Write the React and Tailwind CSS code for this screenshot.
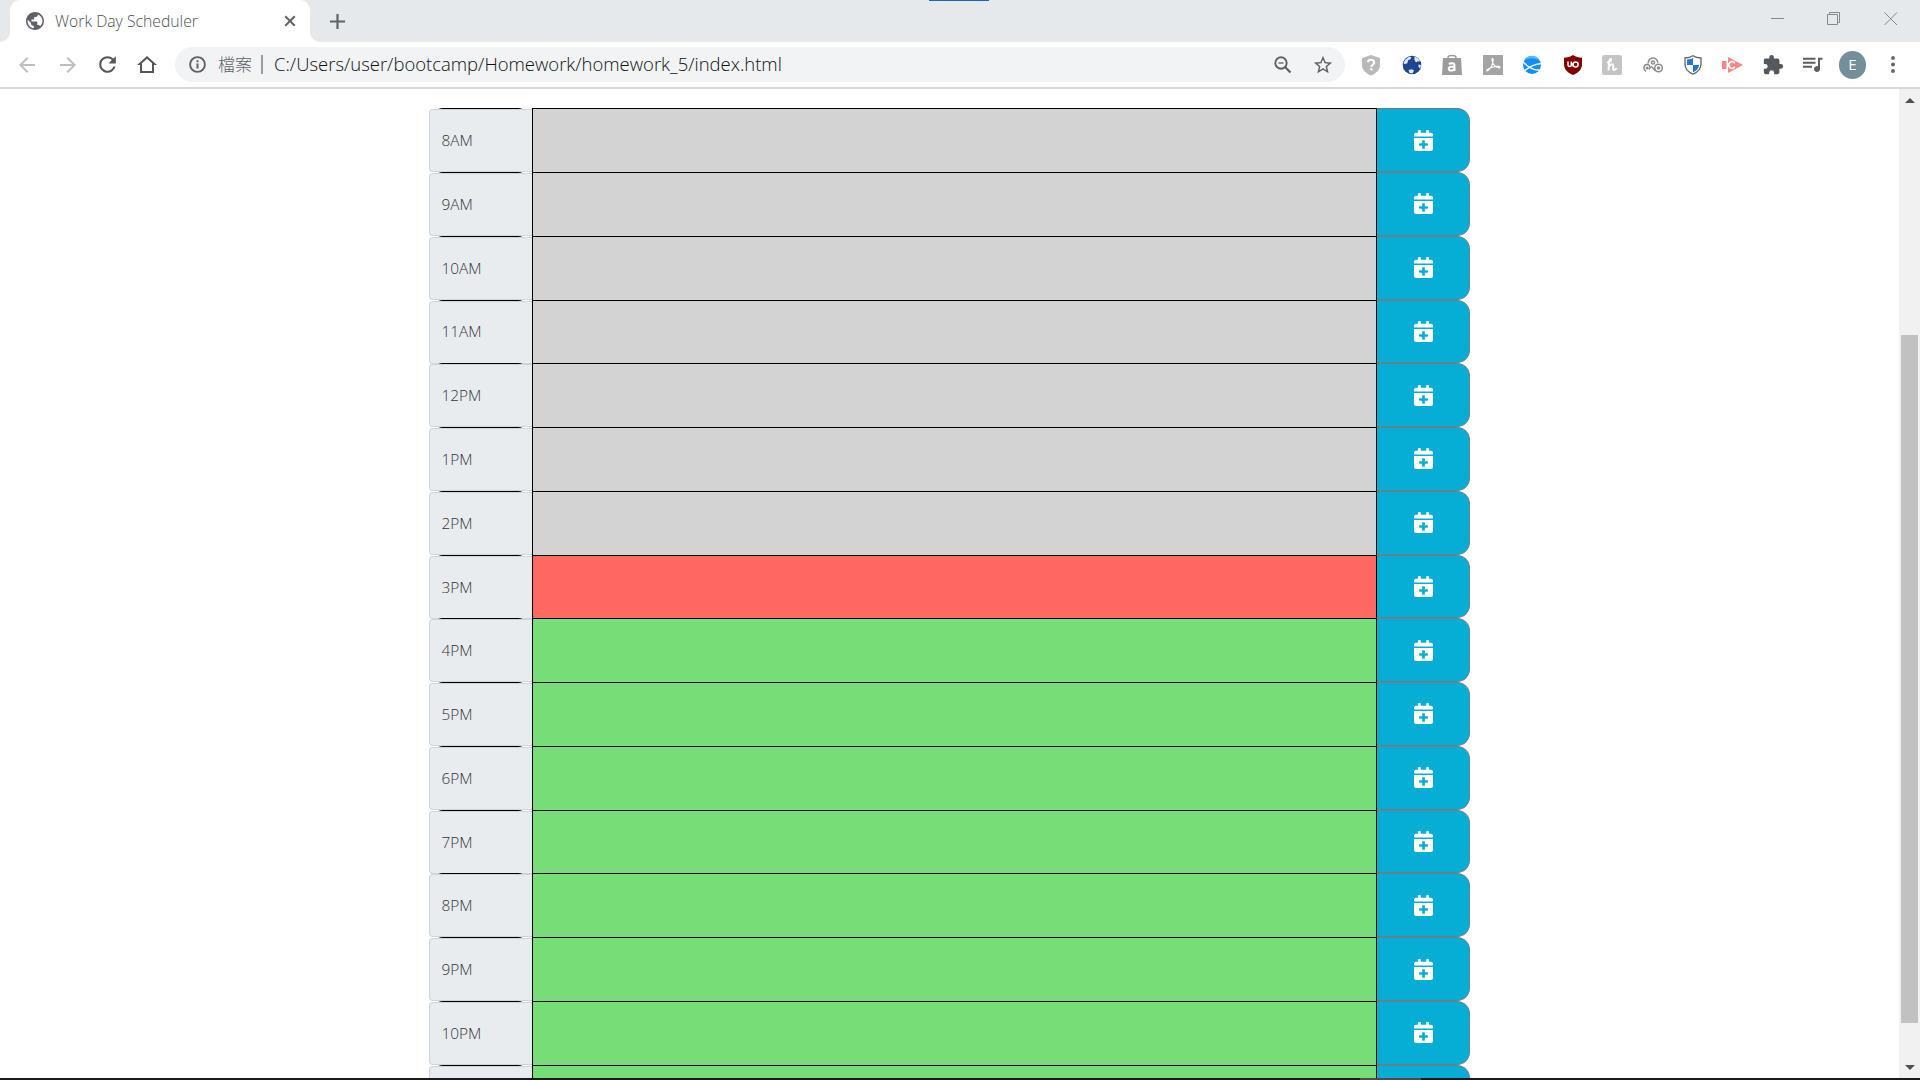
import React from "react";

const HOURS = [
  ["8AM", "past"], ["9AM", "past"], ["10AM", "past"], ["11AM", "past"],
  ["12PM", "past"], ["1PM", "past"], ["2PM", "past"], ["3PM", "present"],
  ["4PM", "future"], ["5PM", "future"], ["6PM", "future"], ["7PM", "future"],
  ["8PM", "future"], ["9PM", "future"], ["10PM", "future"], ["", "future"],
];
const FILL = { past: "bg-[#d3d3d3]", present: "bg-[#ff6961]", future: "bg-[#77dd77]" };

function Material({ d, size = 24, className = "" }) {
  return (
    <svg width={size} height={size} viewBox="0 0 24 24" fill="currentColor" className={`block shrink-0 ${className}`}>
      <path d={d} />
    </svg>
  );
}

function CalendarPlus() {
  return (
    <svg width="19" height="21" viewBox="0 0 448 512" preserveAspectRatio="none" fill="currentColor" className="block">
      <path d="M436 160H12c-6.600 0-12-5.400-12-12v-36c0-26.500 21.500-48 48-48h48V12c0-6.600 5.400-12 12-12h40c6.600 0 12 5.400 12 12v52h128V12c0-6.600 5.400-12 12-12h40c6.600 0 12 5.400 12 12v52h48c26.500 0 48 21.500 48 48v36c0 6.600-5.400 12-12 12zM12 192h424c6.600 0 12 5.400 12 12v260c0 26.500-21.500 48-48 48H48c-26.500 0-48-21.500-48-48V204c0-6.600 5.400-12 12-12zm316 140c0-6.600-5.400-12-12-12h-60v-60c0-6.600-5.400-12-12-12h-40c-6.600 0-12 5.400-12 12v60h-60c-6.600 0-12 5.400-12 12v40c0 6.600 5.400 12 12 12h60v60c0 6.600 5.400 12 12 12h40c6.600 0 12-5.400 12-12v-60h60c6.600 0 12-5.400 12-12v-40z" />
    </svg>
  );
}

function TabStrip() {
  return (
    <div className="flex h-[42px] bg-[#e5e9ec]">
      <div className="flex w-[10px] items-end bg-white">
        <div className="h-full w-full rounded-br-[10px] bg-[#e5e9ec]" />
      </div>
      <div className="bg-[#e5e9ec]">
        <div className="flex h-[42px] w-[300px] items-center rounded-t-[10px] bg-white pl-[13px]">
          <Material size={24} className="text-[#5f6368]" d="M12 3C7.030 3 3 7.030 3 12s4.030 9 9 9 9-4.030 9-9-4.030-9-9-9zm-1.200 16.300C7.300 18.800 4.600 15.700 4.600 12c0-.5.100-.9.200-1.300L8 13.900v.9c0 1 .8 1.800 1.800 1.800l1 .6v2.100zm6.200-2.100c-.3-.8-1-1.300-1.800-1.300h-.9v-2.600c0-.5-.4-.9-.9-.9H8.500V10.600h1.800c.5 0 .9-.4.900-.9V7.900H13c1 0 1.800-.8 1.800-1.800v-.6c2.700 1 4.700 3.600 4.700 6.600 0 1.900-.9 3.800-2.500 5.100z" />
          <span className="ml-[8px] w-[232px] whitespace-nowrap pt-[1px] text-[15.750px] font-light text-[#4c4f54]">Work Day Scheduler</span>
          <svg width="12" height="12" viewBox="0 0 12 12" className="-ml-[3px] block shrink-0"><path d="M1.200 1.200l9.600 9.600M10.800 1.200l-9.600 9.600" stroke="#5f6368" strokeWidth="2" /></svg>
        </div>
      </div>
      <div className="flex w-[600px] bg-white">
        <div className="flex w-full rounded-bl-[10px] bg-[#e5e9ec] pl-[20px]">
          <svg width="15" height="15" viewBox="0 0 15 15" className="mt-[14px] block"><path d="M7.500 0v15M0 7.500h15" stroke="#5f6368" strokeWidth="2.200" /></svg>
        </div>
      </div>
      <div className="ml-auto flex h-[37px] items-center gap-[42px] pr-[22px]">
        <svg width="14" height="14" viewBox="0 0 14 14"><path d="M0 6.500h13" stroke="#87898b" /></svg>
        <svg width="14" height="14" viewBox="0 0 14 14" fill="none" stroke="#87898b"><path d="M.5 2.500h10v10H.5zM2.500 2.500v-2h10v10h-2" /></svg>
        <svg width="14" height="14" viewBox="0 0 14 14" className="ml-px" fill="none" stroke="#87898b"><path d="M.5.5l12.500 12.500M13 .5L.5 13" /></svg>
      </div>
    </div>
  );
}

function Extensions() {
  return (
    <div className="flex items-center">
      <svg width="20" height="22" viewBox="0 0 20 22"><path d="M10 1l9 3v7c0 5-4 8.500-9 10.500C5 19.500 1 16 1 11V4z" fill="#b9b9b9" /><path d="M6.900 8.200C7 6.400 8.300 5.700 10 5.700s3.200 1 3.200 2.700c0 2.300-2.800 2.300-2.900 4.500" fill="none" stroke="#fff" strokeWidth="2" /><path d="M9.200 14.200h2.200v2.100H9.200z" fill="#fff" /></svg>
      <svg width="20" height="20" viewBox="0 0 20 20" className="ml-[21px]"><circle cx="10" cy="10" r="9.300" fill="#1f4590" /><path d="M3.500 4.500L7 1.800l2.500.7-1 1.800-2.500 1-.5 2.700-2.500 1.200L1.300 8zM12.500 1.500l3.500 1.700 2.300 3.300-2.500-.3-1.700 1.300-1.700-2.500zM6.500 15l3.500-.8 2 1.300-1.500 3-3-.5zM16.500 9.500l2.500.5-.8 3.500-1.700-1.500z" fill="#dbe8f8" /></svg>
      <svg width="22" height="22" viewBox="0 0 22 22" className="ml-[19px]"><path d="M7 5V3.500C7 .7 15 .7 15 3.500V5" fill="none" stroke="#999" strokeWidth="1.500" /><path d="M2 4h18l1 17H1z" fill="#9c9c9c" /><path d="M8 10.200c1.400-1.400 5.500-1.400 5.500 1.200V17M13.500 12.800c-2.500-.4-5.800-.2-5.800 2 0 2.400 4.700 2.600 5.800-.5" stroke="#fff" strokeWidth="2" fill="none" /></svg>
      <svg width="20" height="20" viewBox="0 0 20 20" className="ml-[20px]"><path d="M0 0h20v20H0z" fill="#a5a5a5" /><path d="M4 16c3-1 6-6 6.200-11 .1-2-1.500-1.800-1.200 0 .6 4.500 4 7.800 7 8 1.500 0 1.200-1.500-.5-1.600-4-.2-9.500 1.600-11.300 3.300-.7.800-.6 1.400-.2 1.300z" fill="none" stroke="#fff" strokeWidth="1.100" /></svg>
      <svg width="20" height="20" viewBox="0 0 20 20" className="ml-[19px]"><circle cx="10" cy="10" r="9" fill="#168df0" /><path d="M2 5.500A9 9 0 0118 6C13 2.500 7 2.500 2 5.500z" fill="#56b7fa" /><path d="M0 5.500c5 6 11 10 17.500 9.500M19.500 8.500c-6 .4-12 3-17 7.200" fill="none" stroke="#e9f7ff" strokeWidth="1.500" /></svg>
      <svg width="18" height="20" viewBox="0 0 18 20" className="ml-[22px]"><path d="M9 0c3 2 5.500 2.500 9 2.700V9c0 5-3 8.500-9 11-6-2.500-9-6-9-11V2.700C3.500 2.500 6 2 9 0z" fill="#800000" /><path d="M4 6.500V10c0 2 3.300 2 3.300 0V6.500M9 8v3.600" fill="none" stroke="#fff" strokeWidth="1.500" /><circle cx="11.600" cy="9.400" r="2.500" fill="none" stroke="#fff" strokeWidth="1.500" /></svg>
      <svg width="20" height="20" viewBox="0 0 20 20" className="ml-[20px]"><rect width="20" height="20" rx="2.500" fill="#c4c4c4" /><path d="M5 7.500C7 7.500 9.500 6 9.200 4.500 8.500 3 7 5 7 8l-.5 7.500M7 12C8 9.500 11.500 8 11.300 10.800c-.1 1.700-.8 4.200.7 4.200 1.300 0 2-.8 2.500-2" fill="none" stroke="#fff" strokeWidth="1.900" /></svg>
      <svg width="20" height="16" viewBox="0 0 20 16" className="ml-[21px]" fill="none" stroke="#8a8a8a" strokeWidth="1.500"><path d="M3 14.500C-.3 12 .8 7.500 4 7.500c3 0 4 3.500 2 4.800M5 6.500C5.500 3 7.500 1 10 1c3 0 4.800 2.300 4.700 4.700" /><circle cx="10" cy="5.500" r="1.600" /><circle cx="15.500" cy="11" r="3.800" /><circle cx="15.500" cy="11" r="1" /><path d="M8 9.300l4.500 4.500" /><circle cx="4.200" cy="11" r=".8" /></svg>
      <svg width="18" height="20" viewBox="0 0 18 20" className="ml-[21px]"><path d="M9 .8C11.500 2.500 14 3 17 3v6c0 5-3 8-8 10.200C4 17 1 14 1 9V3c3 0 5.500-.5 8-2.200z" fill="#fff" stroke="#5d6770" strokeWidth="1.300" /><path d="M9 3v7H3V4.500C5.500 4.400 7 4 9 3zM9 10h6c-.2 3.500-2.500 5.800-6 7.300z" fill="#2875ce" /></svg>
      <svg width="21" height="16" viewBox="0 0 21 16" className="ml-[20px]"><path d="M0 4h4.500v8H0zM6 0L21 8 6 16z" fill="#fa8585" /><path d="M12.800 6.200A3.300 3.300 0 1012.800 9.800" fill="none" stroke="#fff" strokeWidth="1.800" /></svg>
      <Material size={22} className="ml-[19px] text-[#54575b]" d="M20.500 11H19V7c0-1.100-.9-2-2-2h-4V3.500a2.500 2.500 0 00-5 0V5H4c-1.100 0-2 .9-2 2v3.800h1.500a2.700 2.700 0 010 5.400H2V20c0 1.100.9 2 2 2h3.800v-1.500a2.700 2.700 0 015.400 0V22H17c1.100 0 2-.9 2-2v-4h1.500a2.500 2.500 0 000-5z" />
      <Material size={24} className="ml-[17px] text-[#5b5e62]" d="M14.500 4.800H2v2h12.500v-2zm0 4H2v2h12.500v-2zM2 14.800h9v-2H2v2zM21.500 4.800H17v8.400a3 3 0 10 2 2.800V6.800h2.500v-2z" />
    </div>
  );
}

function Toolbar() {
  return (
    <div className="flex h-[47px] items-center border-b-2 border-[#d8d8d8] bg-white text-[#5f6368]">
      <Material size={24} className="ml-[15px] text-[#bdc0c2]" d="M20 11H7.830l5.590-5.590L12 4l-8 8 8 8 1.410-1.410L7.830 13H20v-2z" />
      <Material size={24} className="ml-[17px] text-[#bdc0c2]" d="M12 4l-1.410 1.410L16.170 11H4v2h12.170l-5.580 5.590L12 20l8-8z" />
      <Material size={25} className="ml-[15px] text-[#54575b]" d="M17.650 6.350A7.958 7.958 0 0012 4a8 8 0 107.730 10h-2.080A6 6 0 1112 6c1.660 0 3.140.69 4.220 1.780L13 11h7V4l-2.350 2.350z" />
      <Material size={24} className="ml-[15px] text-[#54575b]" d="M12 5.690l5 4.500V18H7v-7.810l5-4.500M12 3L2 12h3v8h14v-8h3L12 3z" />
      <div className="ml-[16px] flex h-[35px] w-[1170px] items-center rounded-full bg-[#f1f3f4]">
        <svg width="17" height="17" viewBox="0 0 17 17" className="ml-[14px] block"><circle cx="8.500" cy="8.500" r="7.400" fill="none" stroke="#5f6368" strokeWidth="1.900" /><path d="M7.500 7.500h2v5h-2zM7.500 4.200h2v2h-2z" fill="#5f6368" /></svg>
        <span className="ml-[12px] w-[35px] whitespace-nowrap pb-[2px] font-['Noto_Sans_CJK_TC',sans-serif] text-[17px] font-light leading-[24px]">檔案</span>
        <span className="ml-[8px] h-[19px] w-[2px] bg-[#9b9ea1]" />
        <span className="ml-[11px] whitespace-nowrap pb-[2px] text-[18.480px] font-light leading-[24px] text-[#101214]">C:/Users/user/bootcamp/Homework/homework_5/index.html</span>
        <svg width="18" height="18" viewBox="0 0 18 18" className="ml-auto block" fill="none" stroke="#5f6368" strokeWidth="1.900"><circle cx="7" cy="7" r="5.700" /><path d="M4.500 7h5" strokeWidth="1.400" /><path d="M11 11l5.500 5.500" strokeWidth="2.300" /></svg>
        <Material size={22} className="ml-[20px] mr-[11px]" d="M22 9.240l-7.190-.62L12 2 9.190 8.630 2 9.240l5.460 4.730L5.820 21 12 17.270 18.180 21l-1.630-7.030L22 9.240zM12 15.400l-3.760 2.270 1-4.280-3.320-2.880 4.380-.38L12 6.100l1.710 4.040 4.380.38-3.320 2.880 1 4.280L12 15.400z" />
      </div>
      <div className="ml-[16px]"><Extensions /></div>
      <div className="ml-[14px] flex h-[28px] w-[27px] items-center justify-center rounded-full bg-[#748f9b] text-[15px] leading-none text-white">E</div>
      <svg width="4" height="17" viewBox="0 0 4 17" className="ml-[25px] block" fill="#5f6368"><circle cx="2" cy="2" r="1.900" /><circle cx="2" cy="8.500" r="1.900" /><circle cx="2" cy="15" r="1.900" /></svg>
    </div>
  );
}

function HourRow({ label, state }) {
  return (
    <div className="flex h-[63.766px]">
      <div className="w-[103px] shrink-0">
        <div className="ml-[2px] h-[64.766px] w-[99px] rounded-[12px] border-t border-black">
          <div className="-ml-[2px] flex h-[63px] w-[103px] items-center rounded-l-[4px] border border-r-0 border-[#ced4da] bg-[#e9ecef] pl-[11.500px] text-[15.400px] font-light text-[#30363b]">{label}</div>
        </div>
      </div>
      <div className={`h-[64.766px] w-[845px] shrink-0 border border-black ${FILL[state]}`} />
      <div className="-ml-px flex h-[63.766px] w-[94px] shrink-0 items-center justify-center rounded-r-[13px] border border-[#6c7f88] border-l-black bg-[#06aed5] text-white">
        <CalendarPlus />
      </div>
    </div>
  );
}

function ScrollBar() {
  return (
    <div className="flex w-[21px] shrink-0 flex-col items-center bg-[#f1f1f1]">
      <svg width="10" height="5" viewBox="0 0 10 5" className="mt-[9px] block"><path d="M5 0l5 5H0z" fill="#505050" /></svg>
      <div className="mt-[232px] h-[688px] w-[17px] shrink-0 bg-[#c1c1c1]" />
      <svg width="10" height="5" viewBox="0 0 10 5" className="mt-[42px] block"><path d="M0 0h10L5 5z" fill="#505050" /></svg>
    </div>
  );
}

export default function App() {
  return (
    <div className="relative flex h-[1080px] w-[1920px] flex-col overflow-hidden bg-white font-['Open_Sans','Noto_Sans',sans-serif]">
      <TabStrip />
      <Toolbar />
      <div className="flex h-[989px] overflow-hidden">
        <main className="flex-1 pl-[429px] pt-[19.234px]">
          {HOURS.map(([label, state], i) => <HourRow key={i} label={label} state={state} />)}
        </main>
        <ScrollBar />
      </div>
      <div className="flex h-[2px] shrink-0 bg-[#1b1919] pl-[1360px]">
        <div className="h-full w-[61px] bg-[#4b4b4b]" />
      </div>
      <div className="absolute left-[929px] top-0 h-px w-[60px] bg-[#1c68a8]" />
    </div>
  );
}
